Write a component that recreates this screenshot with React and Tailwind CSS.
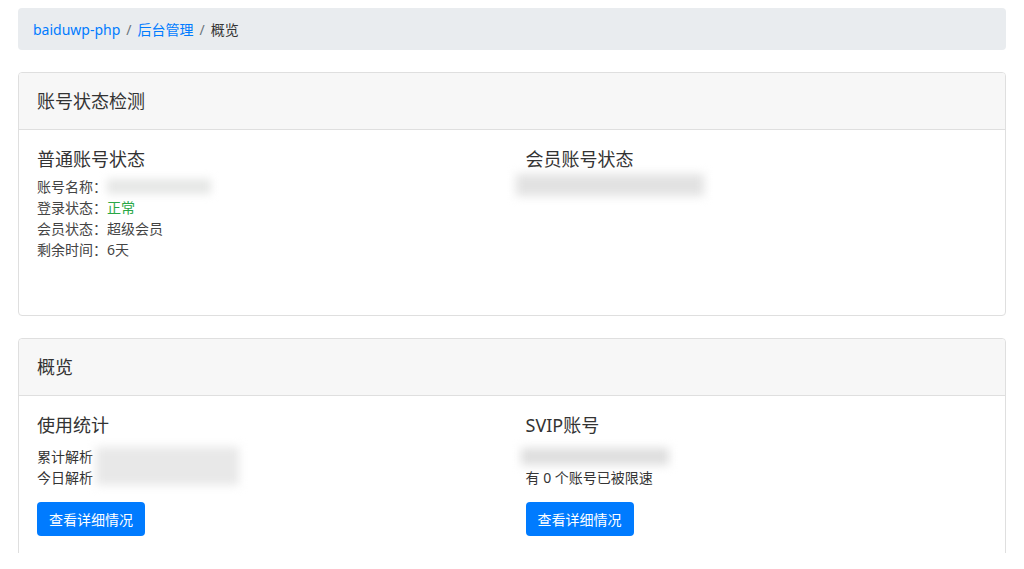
export default function App() {
  const font = { fontFamily: '"Noto Sans", "Noto Sans CJK SC", sans-serif' };
  return (
    <div className="w-[1024px] h-[569px] bg-white overflow-hidden" style={font}>
      <div className="h-[553px] overflow-hidden px-[18px] pt-[8px] text-[14px] text-[#333]">
        {/* breadcrumb */}
        <nav className="h-[42px] rounded-[4px] bg-[#e9ecef] flex items-center px-[15px] text-[14px]">
          <span className="text-[#007bff]">baiduwp-php</span>
          <span className="text-[#6c757d] px-[6px]">/</span>
          <span className="text-[#007bff]">后台管理</span>
          <span className="text-[#6c757d] px-[6px]">/</span>
          <span className="text-[#333]">概览</span>
        </nav>

        {/* account status */}
        <section className="mt-[22px] border border-[#dfdfdf] rounded-[4px] overflow-hidden">
          <div className="h-[57px] bg-[#f7f7f7] border-b border-[#dfdfdf] flex items-center px-[18px] text-[18px] text-[#333]">
            账号状态检测
          </div>
          <div className="h-[185px] px-[18px] pt-[18px] grid grid-cols-2 gap-[27px]">
            <div>
              <h5 className="text-[18px] leading-[22px] text-[#333] mb-[6px]">普通账号状态</h5>
              <div className="leading-[21px] text-[#444]">
                <div className="flex items-center">
                  账号名称：
                  <span className="inline-block w-[104px] h-[15px] bg-[#e6e7e6] blur-[4px]" />
                </div>
                <div>
                  登录状态：<span className="text-[#28a745]">正常</span>
                </div>
                <div>会员状态：超级会员</div>
                <div>剩余时间：6天</div>
              </div>
            </div>
            <div>
              <h5 className="text-[18px] leading-[22px] text-[#333] mb-[4px]">会员账号状态</h5>
              <div className="ml-[-10px] w-[188px] h-[22px] bg-[#e2e2e2] blur-[5px]" />
            </div>
          </div>
        </section>

        {/* overview */}
        <section className="mt-[22px] border border-[#dfdfdf] rounded-[4px] h-[240px]">
          <div className="h-[57px] bg-[#f7f7f7] border-b border-[#dfdfdf] flex items-center px-[18px] text-[18px] text-[#333] rounded-t-[4px]">
            概览
          </div>
          <div className="px-[18px] pt-[18px] grid grid-cols-2 gap-[27px]">
            <div>
              <h5 className="text-[18px] leading-[22px] text-[#333] mb-[10px]">使用统计</h5>
              <div className="flex leading-[21px] text-[#333]">
                <div>
                  <div>累计解析</div>
                  <div>今日解析</div>
                </div>
                <div className="ml-[3px] mt-[1px] w-[143px] h-[38px] bg-[#e8e8e8] blur-[5px]" />
              </div>
              <button className="mt-[14px] h-[34px] px-[12px] rounded-[4px] bg-[#007bff] text-white text-[14px]">
                查看详细情况
              </button>
            </div>
            <div>
              <h5 className="text-[18px] leading-[22px] text-[#333] mb-[10px]">SVIP账号</h5>
              <div className="h-[21px] flex items-center">
                <div className="ml-[-5px] w-[148px] h-[17px] bg-[#dedede] blur-[5px]" />
              </div>
              <div className="leading-[21px] text-[#333]">有 0 个账号已被限速</div>
              <button className="mt-[14px] h-[34px] px-[12px] rounded-[4px] bg-[#007bff] text-white text-[14px]">
                查看详细情况
              </button>
            </div>
          </div>
        </section>
      </div>
    </div>
  );
}
